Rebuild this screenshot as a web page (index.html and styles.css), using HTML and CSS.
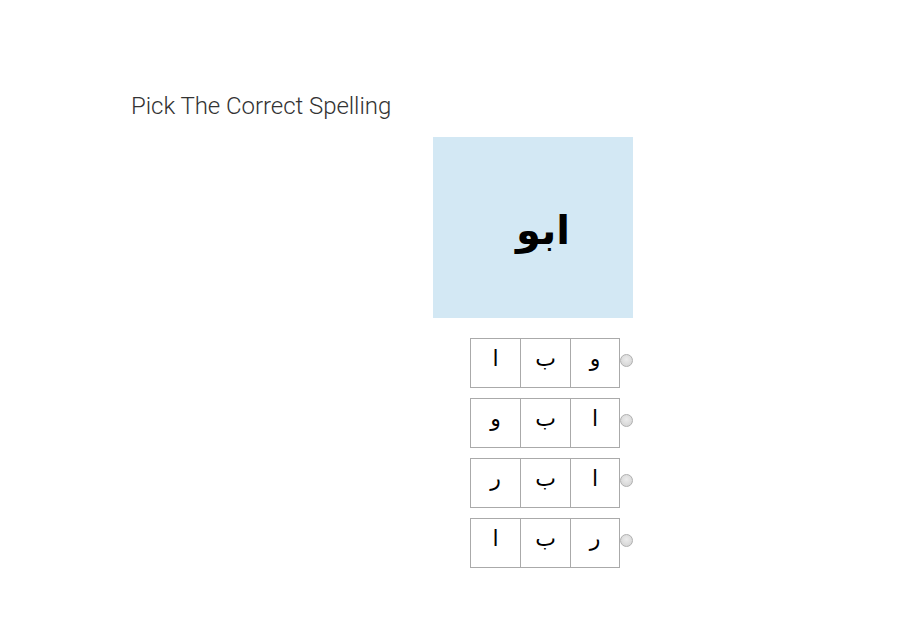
FILE: index.html
```html
<!DOCTYPE html>
<html>
<head>
<meta charset="utf-8">
<link rel="stylesheet" href="styles.css">
</head>
<body>
<div class="page">
  <h1 class="title">Pick The Correct Spelling</h1>
  <div class="picture"><span class="word" dir="rtl">ابو</span></div>
  <div class="options">
    <div class="option">
      <div class="cells"><div class="cell">ا</div><div class="cell">ب</div><div class="cell">و</div></div>
      <span class="radio"></span>
    </div>
    <div class="option">
      <div class="cells"><div class="cell">و</div><div class="cell">ب</div><div class="cell">ا</div></div>
      <span class="radio"></span>
    </div>
    <div class="option">
      <div class="cells"><div class="cell">ر</div><div class="cell">ب</div><div class="cell">ا</div></div>
      <span class="radio"></span>
    </div>
    <div class="option">
      <div class="cells"><div class="cell">ا</div><div class="cell">ب</div><div class="cell">ر</div></div>
      <span class="radio"></span>
    </div>
  </div>
</div>
</body>
</html>
```
FILE: styles.css
```css
html, body {
  margin: 0;
  padding: 0;
  background: #ffffff;
}
.page {
  padding: 90px 0 0 131px;
}
.title {
  margin: 0;
  font-family: Roboto, "Liberation Sans", sans-serif;
  font-weight: 300;
  font-size: 24px;
  line-height: 32px;
  letter-spacing: -0.05px;
  color: #333333;
}
.picture {
  margin: 15px 0 0 302px;
  width: 200px;
  height: 181px;
  background: #d3e8f4;
  display: flex;
  align-items: center;
  justify-content: center;
}
.word {
  font-family: "DejaVu Sans", serif;
  font-weight: bold;
  font-size: 40px;
  color: #000;
  margin-left: 20px;
  margin-top: 4px;
}
.options {
  margin: 20px 0 0 339px;
  display: flex;
  flex-direction: column;
  gap: 10px;
}
.option {
  display: flex;
  align-items: flex-start;
}
.cells {
  display: flex;
  border: 1px solid #aaaaaa;
  border-right: none;
}
.cell {
  width: 49px;
  height: 48px;
  border-right: 1px solid #aaaaaa;
  text-align: center;
  font-family: "DejaVu Sans", serif;
  font-size: 22px;
  line-height: 40px;
  color: #000;
}
.cell:last-child {
  width: 48px;
}
.radio {
  width: 11px;
  height: 11px;
  border-radius: 50%;
  border: 1px solid #b0b0b0;
  background: radial-gradient(circle at 50% 40%, #ececec, #d0d0d0);
  margin: 16px 0 0 0;
}
```
